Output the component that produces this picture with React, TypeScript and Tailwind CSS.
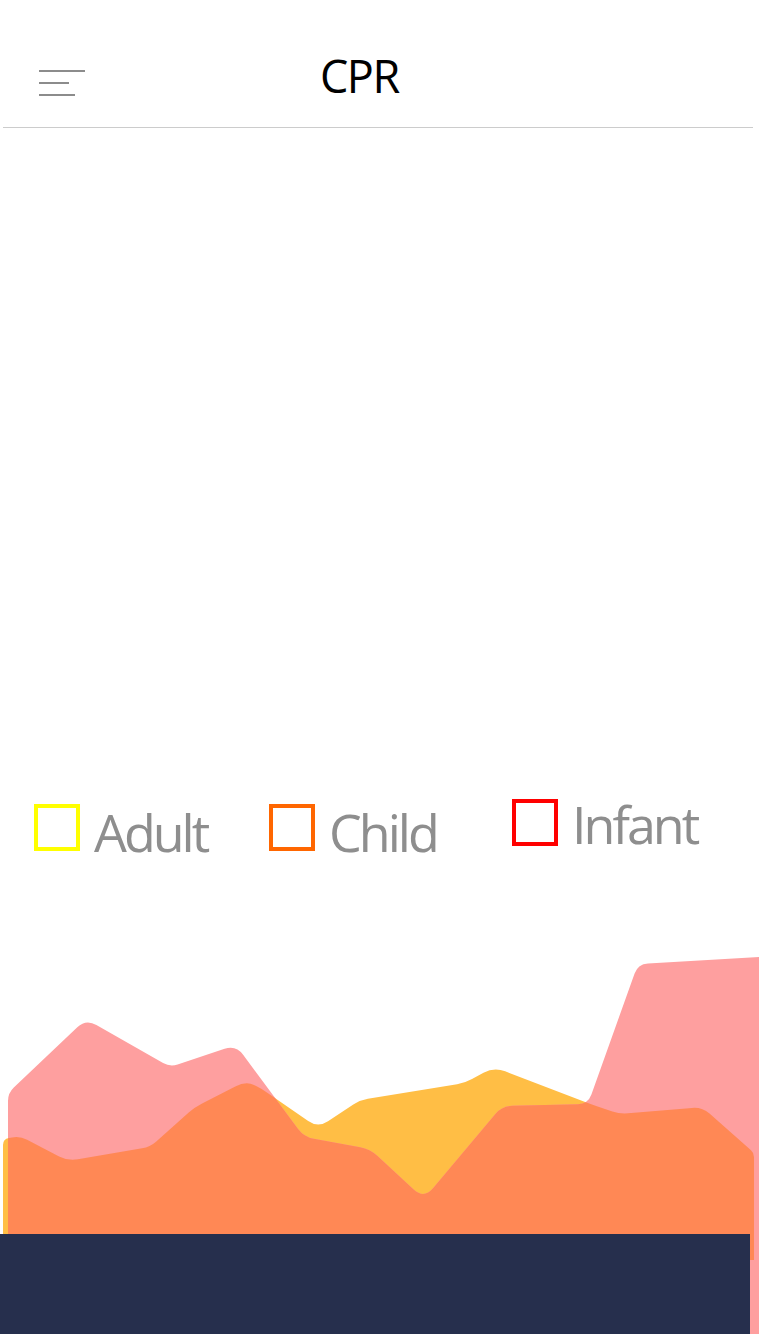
type Pt = [number, number, number?];

// build a closed path with rounded joints (r = corner radius per point)
const roundPath = (pts: Pt[]) => {
  const n = pts.length;
  let d = "";
  for (let i = 0; i < n; i++) {
    const [x, y, r = 0] = pts[i];
    const [px, py] = pts[(i - 1 + n) % n];
    const [nx, ny] = pts[(i + 1) % n];
    if (!r) {
      d += `${i === 0 ? "M" : "L"}${x},${y} `;
      continue;
    }
    const l1 = Math.hypot(x - px, y - py);
    const l2 = Math.hypot(nx - x, ny - y);
    const a = Math.min(r, l1 / 2) / l1;
    const b = Math.min(r, l2 / 2) / l2;
    const ax = x + (px - x) * a;
    const ay = y + (py - y) * a;
    const bx = x + (nx - x) * b;
    const by = y + (ny - y) * b;
    d += `${i === 0 ? "M" : "L"}${ax.toFixed(1)},${ay.toFixed(1)} Q${x},${y} ${bx.toFixed(1)},${by.toFixed(1)} `;
  }
  return d + "Z";
};

const YELLOW: Pt[] = [
  [3, 1260],
  [3, 1139, 6],
  [20, 1136, 8],
  [68, 1161, 10],
  [150, 1147, 8],
  [195, 1107, 8],
  [246, 1081, 12],
  [262, 1089, 6],
  [318, 1128, 12],
  [360, 1100, 8],
  [465, 1083, 8],
  [494, 1067, 12],
  [590, 1104, 8],
  [620, 1114, 8],
  [702, 1107, 10],
  [754, 1153, 4],
  [754, 1260],
];

const PINK: Pt[] = [
  [8, 1334],
  [8, 1093, 8],
  [86, 1019, 12],
  [170, 1067, 8],
  [236, 1045, 12],
  [304, 1137, 10],
  [370, 1149, 10],
  [424, 1199, 14],
  [502, 1106, 10],
  [588, 1104, 10],
  [638, 964, 10],
  [759, 957],
  [759, 1334],
];

const legend = [
  { label: "Adult", color: "border-[#ffff00]", w: "w-[235px]", box: "mt-[6px]", text: "mt-[8px]" },
  { label: "Child", color: "border-[#ff6600]", w: "w-[243px]", box: "mt-[6px]", text: "mt-[8px]" },
  { label: "Infant", color: "border-[#ff0000]", w: "w-[200px]", box: "mt-[1px]", text: "mt-0" },
];

const Chart = () => {
  const y = roundPath(YELLOW);
  const p = roundPath(PINK);
  return (
    <svg width="759" height="394" viewBox="0 940 759 394" className="block">
      <defs>
        <clipPath id="pinkClip">
          <path d={p} />
        </clipPath>
      </defs>
      <path d={y} fill="#ffbe45" />
      <path d={p} fill="#fe9f9f" />
      <path d={y} fill="#ff8855" clipPath="url(#pinkClip)" />
    </svg>
  );
};

const App = () => {
  return (
    <div
      className="w-[759px] h-[1334px] flex flex-col bg-white overflow-hidden"
      style={{ fontFamily: '"Open Sans", "Liberation Sans", sans-serif' }}
    >
      <header className="h-[128px] ml-[3px] w-[750px] border-b border-[#cccccc] flex items-start pt-[53px]">
        <button className="ml-[36px] mt-[17px] flex flex-col gap-[10px]">
          <span className="block w-[46px] h-[2px] bg-[#8c8c8c]" />
          <span className="block w-[30px] h-[2px] bg-[#8c8c8c]" />
          <span className="block w-[36px] h-[2px] bg-[#8c8c8c]" />
        </button>
        <h1 className="ml-[235px] text-[45px] leading-none tracking-[-1.5px] text-black">CPR</h1>
      </header>

      <div className="mt-[670px] h-[60px] flex pl-[34px]">
        {legend.map((item) => (
          <div key={item.label} className={`${item.w} flex items-start`}>
            <div className={`${item.box} w-[46px] h-[47px] border-[4px] ${item.color}`} />
            <span className={`${item.text} ml-[14px] text-[52px] leading-none tracking-[-3px] text-[#8e8e8e]`}>
              {item.label}
            </span>
          </div>
        ))}
      </div>

      <div className="mt-[82px] relative h-[394px]">
        <Chart />
        <div className="absolute left-0 bottom-0 w-[750px] h-[100px] bg-[#262f4d]" />
      </div>
    </div>
  );
};

export default App;
